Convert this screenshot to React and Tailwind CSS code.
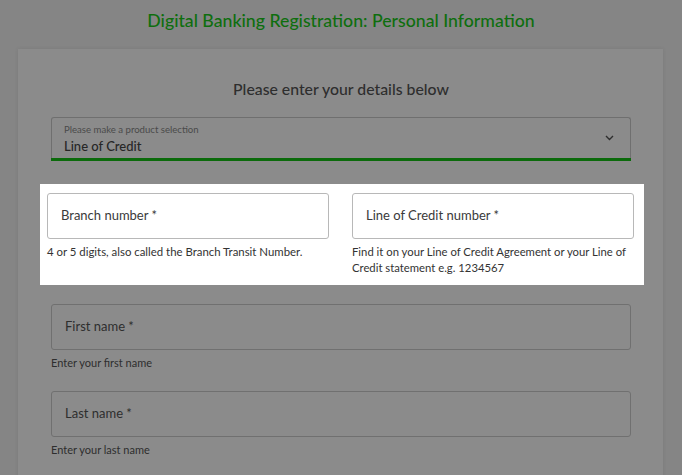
export default function App() {
  return (
    <div className="w-[682px] h-[475px] overflow-hidden bg-[#858585] font-['Lato',sans-serif] text-[#2b2b2b]">
      <h1 className="pt-[10px] text-center text-[17.7px] font-medium leading-[22px] text-[#0e6e0e]">
        Digital Banking Registration: Personal Information
      </h1>

      <div className="mx-[18px] mt-[17px] w-[645px] bg-[#8b8b8b] pl-[33px] pr-[32px] pt-[29px] pb-10 shadow-[0_0_4px_rgba(0,0,0,0.08)]">
        <h2 className="text-center text-[15.8px] font-medium leading-[22px] text-[#2e2e2e]">
          Please enter your details below
        </h2>

        {/* product select */}
        <div className="relative mt-[17px] h-[44px] rounded-t-[3px] border border-b-0 border-[#6f6f6f] px-[12px] pt-[6px]">
          <div className="text-[9.6px] leading-[12px] text-[#4a4a4a]">Please make a product selection</div>
          <div className="mt-[2px] text-[13px] font-medium leading-[17px] text-[#262626]">Line of Credit</div>
          <svg className="absolute right-[16px] top-[17px]" width="9" height="6" viewBox="0 0 9 6" fill="none">
            <path d="M1 1l3.5 3.5L8 1" stroke="#2e2e2e" strokeWidth="1.4" />
          </svg>
          <div className="absolute -left-px -right-px bottom-0 h-[3px] bg-[#0b6a0b]" />
        </div>

        {/* highlighted block */}
        <div className="-ml-[11px] -mr-[13px] mt-[23px] bg-white pl-[7px] pr-[10px] pt-[9px] pb-[9px]">
          <div className="grid grid-cols-2 gap-x-[23px]">
            <div>
              <div className="flex h-[46px] items-center rounded-[3px] border border-[#b8b8b8] px-[13px] text-[13px] text-[#3a3a3a]">
                Branch number *
              </div>
              <p className="mt-[5px] text-[11.4px] leading-[16px] text-[#333]">
                4 or 5 digits, also called the Branch Transit Number.
              </p>
            </div>
            <div>
              <div className="flex h-[46px] items-center rounded-[3px] border border-[#b8b8b8] px-[13px] text-[13px] text-[#3a3a3a]">
                Line of Credit number *
              </div>
              <p className="mt-[5px] text-[11.3px] leading-[16px] text-[#333]">
                Find it on your Line of Credit Agreement or your Line of Credit statement e.g. 1234567
              </p>
            </div>
          </div>
        </div>

        {/* name fields */}
        <div className="mt-[19px] flex flex-col gap-[20px]">
          <div>
            <div className="flex h-[46px] items-center rounded-[3px] border border-[#707070] px-[13px] text-[13px] text-[#2e2e2e]">
              First name *
            </div>
            <p className="mt-[5px] text-[11px] leading-[16px] text-[#2e2e2e]">Enter your first name</p>
          </div>
          <div>
            <div className="flex h-[46px] items-center rounded-[3px] border border-[#707070] px-[13px] text-[13px] text-[#2e2e2e]">
              Last name *
            </div>
            <p className="mt-[5px] text-[11px] leading-[16px] text-[#2e2e2e]">Enter your last name</p>
          </div>
        </div>
      </div>
    </div>
  );
}
